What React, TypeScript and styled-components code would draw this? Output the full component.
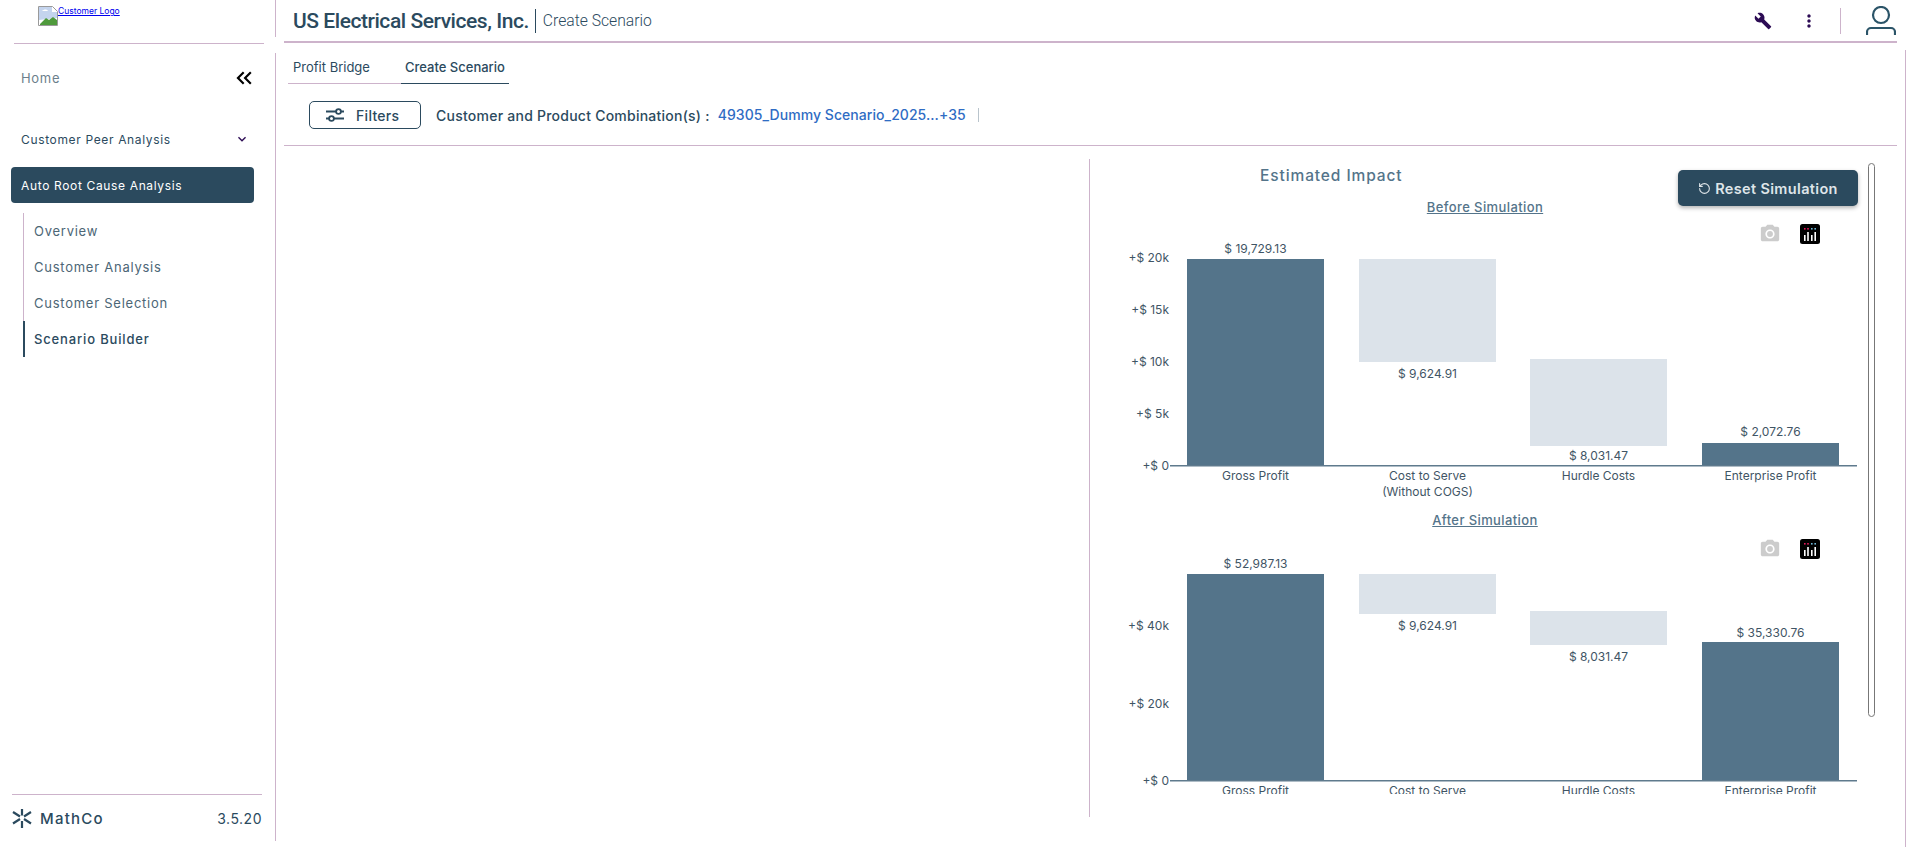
import React from 'react';
import styled, { createGlobalStyle } from 'styled-components';
import { MdBuild, MdMoreVert, MdKeyboardArrowDown, MdKeyboardDoubleArrowLeft, MdPhotoCamera } from 'react-icons/md';
import { RotateCcw } from 'lucide-react';

const GlobalStyle = createGlobalStyle`
  html, body { margin: 0; padding: 0; background: #fff; }
  body { font-family: Inter, "Noto Sans", sans-serif; color: #2b4a5e; }
  * { box-sizing: border-box; }
`;

const Page = styled.div`
  display: flex;
  width: 1920px;
  height: 847px;
  overflow: hidden;
`;

const Sidebar = styled.aside`
  width: 276px;
  flex: none;
  display: flex;
  flex-direction: column;
`;

const LogoBox = styled.div`
  height: 37px;
  padding: 6px 0 0 38px;
  border-right: 1px solid #cdb3cb;
`;

const LogoLink = styled.a`
  display: inline-flex;
  align-items: flex-start;
  color: #0000ee;
  font-size: 8.5px;
  line-height: 11px;
  text-decoration: underline;
`;

const LogoGap = styled.div`
  height: 16px;
  padding: 6px 12px 0 14px;
`;

const SideRule = styled.div`
  height: 1px;
  background: #cdb3cb;
`;

const SideBody = styled.div`
  height: 788px;
  border-right: 1px solid #cdb3cb;
  display: flex;
  flex-direction: column;
`;

const HomeRow = styled.div`
  height: 50px;
  padding: 0 18px 0 21px;
  display: flex;
  align-items: center;
  justify-content: space-between;
  font-size: 13px;
  letter-spacing: 0.7px;
  color: #6c7f8c;
`;

const NavHead = styled.div`
  margin-top: 21px;
  height: 30px;
  padding: 0 25px 0 21px;
  display: flex;
  align-items: center;
  justify-content: space-between;
  font-size: 12px;
  letter-spacing: 0.65px;
  color: #2b4a5e;
`;

const NavActive = styled.div`
  margin: 13px 21px 0 11px;
  height: 36px;
  padding-left: 10px;
  display: flex;
  align-items: center;
  border-radius: 4px;
  background: #2b4a5e;
  color: #fff;
  font-size: 12px;
  font-weight: 400;
  letter-spacing: 0.65px;
`;

const SubNav = styled.div`
  margin: 10px 0 0 23px;
  border-left: 1px solid #cdb3cb;
`;

const SubItem = styled.div<{ $active?: boolean }>`
  height: 36px;
  margin-left: ${p => (p.$active ? '-1px' : '0')};
  padding-left: ${p => (p.$active ? '9px' : '10px')};
  border-left: ${p => (p.$active ? '2px solid #2b4a5e' : 'none')};
  display: flex;
  align-items: center;
  font-size: 13px;
  font-weight: ${p => (p.$active ? 500 : 400)};
  letter-spacing: ${p => (p.$active ? '0.85px' : '0.75px')};
  color: ${p => (p.$active ? '#2b4a5e' : '#4c6676')};
`;

const SideFooter = styled.div`
  margin: auto 13px 0 12px;
  border-top: 1px solid #cdb3cb;
  height: 47px;
  display: flex;
  align-items: center;
  justify-content: space-between;
`;

const Brand = styled.div`
  display: flex;
  align-items: center;
  gap: 8px;
  font-size: 15px;
  font-weight: 500;
  letter-spacing: 1.25px;
  color: #2b4a5e;
`;

const Version = styled.div`
  font-size: 14px;
  letter-spacing: 0.5px;
  color: #2b4a5e;
`;

const Main = styled.main`
  flex: 1;
  min-width: 0;
  padding-left: 8px;
  display: flex;
  flex-direction: column;
`;

const Header = styled.header`
  height: 43px;
  margin-right: 23px;
  padding: 0 1px 0 9px;
  border-bottom: 2px solid #cdb3cb;
  display: flex;
  align-items: center;
`;

const Title = styled.h1`
  margin: 0;
  padding-right: 6px;
  font-family: Roboto, sans-serif;
  font-size: 21px;
  font-weight: 500;
  line-height: 24px;
  letter-spacing: -0.45px;
  color: #2b4a5e;
  border-right: 1px solid #2b4a5e;
`;

const SubTitle = styled.span`
  margin-left: 7px;
  font-family: Roboto, sans-serif;
  font-size: 15.7px;
  font-weight: 300;
  color: #2b4a5e;
`;

const HeaderTools = styled.div`
  margin-left: auto;
  display: flex;
  align-items: center;
  color: #2c0b54;
`;

const ToolIcon = styled.span`
  width: 46px;
  display: flex;
  justify-content: center;
`;

const ToolRule = styled.span`
  width: 1px;
  height: 26px;
  margin: 0 25px 0 8px;
  background: #cdb3cb;
`;

const Body = styled.div`
  flex: 1;
  min-height: 0;
  margin-top: 7px;
  margin-right: 14px;
  border-right: 1px solid #cdb3cb;
  display: flex;
  flex-direction: column;
`;

const Tabs = styled.div`
  height: 34px;
  margin-left: 4px;
  display: flex;
`;

const Tab = styled.div<{ $active?: boolean }>`
  width: ${p => (p.$active ? '108px' : '113px')};
  padding-left: ${p => (p.$active ? '4px' : '5px')};
  display: flex;
  align-items: center;
  font-size: 13px;
  font-weight: ${p => (p.$active ? 500 : 400)};
  color: #2b4a5e;
  border-bottom: 1px solid ${p => (p.$active ? '#2b4a5e' : '#cdb3cb')};
`;

const FilterRow = styled.div`
  height: 62px;
  margin-right: 8px;
  padding: 1px 0 0 25px;
  border-bottom: 1px solid #cdb3cb;
  display: flex;
  align-items: center;
`;

const FilterButton = styled.button`
  width: 112px;
  height: 28px;
  padding: 0 0 0 16px;
  display: flex;
  align-items: center;
  gap: 12px;
  background: #fff;
  border: 1px solid #2b4a5e;
  border-radius: 5px;
  color: #2b4a5e;
  font: 500 14px Inter, sans-serif;
  letter-spacing: 0.3px;
`;

const ComboLabel = styled.span`
  margin-left: 15px;
  font-size: 14px;
  font-weight: 500;
  letter-spacing: 0.24px;
  color: #2b4a5e;
`;

const ComboValue = styled.span`
  margin-left: 8px;
  padding-right: 12px;
  font-size: 14px;
  font-weight: 500;
  line-height: 14px;
  letter-spacing: 0.06px;
  color: #2f6cc4;
  border-right: 1px solid #b9c4cc;
`;

const Content = styled.div`
  flex: 1;
  min-height: 0;
  display: flex;
  justify-content: flex-end;
`;

const ImpactPanel = styled.section`
  position: relative;
  width: 816px;
  height: 658px;
  margin: 13px 0 0 0;
  border-left: 1px solid #cdb3cb;
`;

const ImpactTitle = styled.h2`
  margin: 7px 0 0 170px;
  height: 18px;
  font-size: 15.5px;
  line-height: 20px;
  font-weight: 500;
  letter-spacing: 0.9px;
  color: #54748a;
`;

const ResetButton = styled.button`
  position: absolute;
  top: 11px;
  left: 588px;
  width: 180px;
  height: 36px;
  display: flex;
  align-items: center;
  justify-content: center;
  gap: 4px;
  border: none;
  border-radius: 5px;
  background: #2b4a5e;
  color: #dfe5e9;
  font: 600 14.5px Inter, sans-serif;
  letter-spacing: 0.35px;
  box-shadow: 0 2px 4px rgba(0, 0, 0, 0.3);
`;

const ScrollThumb = styled.div`
  position: absolute;
  top: 4px;
  left: 778px;
  width: 7px;
  height: 554px;
  background: #fff;
  border: 1px solid #777;
  border-radius: 4px;
`;

const ChartBlock = styled.div`
  width: 790px;
  padding-top: 13px;
`;

const ChartTitle = styled.div`
  height: 20px;
  text-align: center;
  font-size: 13px;
  line-height: 20px;
  font-weight: 500;
  letter-spacing: 0.4px;
  text-decoration: underline;
  color: #54748a;
`;

const PlotArea = styled.div<{ $height: number }>`
  position: relative;
  height: ${p => p.$height}px;
  overflow: hidden;
`;

const Modebar = styled.div<{ $top: number }>`
  position: absolute;
  top: ${p => p.$top}px;
  right: 60px;
  display: flex;
  align-items: center;
  gap: 19px;
  color: #cccccc;
`;

const PlotSvg = styled.svg`
  display: block;
  font-family: Inter, "Noto Sans", sans-serif;
  font-size: 12px;
  fill: #3f5565;
`;

type Bar = {
  x: number;
  top: number;
  bottom: number;
  kind: 'total' | 'step';
  value: string;
  valueY: number;
  label: string[];
};

type Tick = { label: string; y: number };

const BAR_W = 137;

const Chart = ({ bars, ticks, axisY, height, labelY }: { bars: Bar[]; ticks: Tick[]; axisY: number; height: number; labelY: number }) => (
  <PlotSvg width={790} height={height}>
    {ticks.map(t => (
      <text key={t.label} x={79} y={t.y + 4} textAnchor="end">{t.label}</text>
    ))}
    {bars.map(b => (
      <g key={b.label[0]}>
        <rect
          x={b.x}
          y={b.top}
          width={BAR_W}
          height={b.bottom - b.top}
          fill={b.kind === 'total' ? '#54748a' : '#dce3ea'}
        />
        <text x={b.x + BAR_W / 2} y={b.valueY + 4} textAnchor="middle">{b.value}</text>
        {b.label.map((line, i) => (
          <text key={line} x={b.x + BAR_W / 2} y={labelY + i * 16} textAnchor="middle">{line}</text>
        ))}
      </g>
    ))}
    <rect x={80} y={axisY - 1} width={687} height={1.5} fill="#5f7a8d" />
  </PlotSvg>
);

const BrokenImage = () => (
  <svg width="20" height="20" viewBox="0 0 20 20">
    <path d="M.5.5h14l5 5v14H.5z" fill="#fff" stroke="#9a9a9a" />
    <path d="M1 1h13v5h5v6L1 14z" fill="#c4d4ee" />
    <path d="M2 18l6-6 3 2 4-3 4 3v5H2z" fill="#4f9a3c" />
    <path d="M4 5c2-2 5-2 6 0z" fill="#fff" />
  </svg>
);

const FilterIcon = () => (
  <svg width="18" height="14" viewBox="0 0 18 14" fill="none" stroke="#2b4a5e" strokeWidth="1.8">
    <path d="M0 3.5h10M15 3.5h3M0 10.5h3M8 10.5h10" />
    <circle cx="12.5" cy="3.5" r="2.4" />
    <circle cx="5.5" cy="10.5" r="2.4" />
  </svg>
);

const UserIcon = () => (
  <svg width="30" height="30" viewBox="0 0 30 30" fill="none" stroke="#2b5468" strokeWidth="2.2">
    <circle cx="15" cy="9" r="8" />
    <path d="M1 29v-3a4 4 0 0 1 4-4h20a4 4 0 0 1 4 4v3" />
  </svg>
);

const MathCoMark = () => (
  <svg width="20" height="20" viewBox="0 0 20 20" stroke="#2b4a5e" strokeWidth="2.2">
    <path d="M10 1v6.5M10 13v7M1 4l7 4.5M19 4l-7 4.5M1 15.5l7-4.5M19 15.5l-7-4.5" />
  </svg>
);

const PlotlyIcon = () => (
  <svg width="20" height="20" viewBox="0 0 20 20">
    <rect width="20" height="20" rx="2.5" fill="#000" />
    <g fill="#e6175c">
      <rect x="4" y="4" width="1.6" height="1.6" />
      <rect x="7.2" y="4" width="1.6" height="1.6" />
    </g>
    <g fill="#6fb7d6">
      <rect x="11" y="4" width="1.6" height="1.6" />
      <rect x="14.4" y="4" width="1.6" height="1.6" />
    </g>
    <g fill="#fff">
      <rect x="4" y="11" width="1.6" height="6" />
      <rect x="7.2" y="8" width="1.6" height="9" />
      <rect x="11" y="11" width="1.6" height="6" />
      <rect x="14.4" y="8" width="1.6" height="9" />
    </g>
  </svg>
);

const beforeBars: Bar[] = [
  { x: 97, top: 42, bottom: 249, kind: 'total', value: '$ 19,729.13', valueY: 32, label: ['Gross Profit'] },
  { x: 269, top: 42, bottom: 145, kind: 'step', value: '$ 9,624.91', valueY: 157, label: ['Cost to Serve', '(Without COGS)'] },
  { x: 440, top: 142, bottom: 229, kind: 'step', value: '$ 8,031.47', valueY: 239, label: ['Hurdle Costs'] },
  { x: 612, top: 226, bottom: 249, kind: 'total', value: '$ 2,072.76', valueY: 215, label: ['Enterprise Profit'] },
];

const afterBars: Bar[] = [
  { x: 97, top: 44, bottom: 251, kind: 'total', value: '$ 52,987.13', valueY: 34, label: ['Gross Profit'] },
  { x: 269, top: 44, bottom: 84, kind: 'step', value: '$ 9,624.91', valueY: 96, label: ['Cost to Serve'] },
  { x: 440, top: 81, bottom: 115, kind: 'step', value: '$ 8,031.47', valueY: 127, label: ['Hurdle Costs'] },
  { x: 612, top: 112, bottom: 251, kind: 'total', value: '$ 35,330.76', valueY: 103, label: ['Enterprise Profit'] },
];

const beforeTicks: Tick[] = [
  { label: '+$ 20k', y: 41 },
  { label: '+$ 15k', y: 93 },
  { label: '+$ 10k', y: 145 },
  { label: '+$ 5k', y: 197 },
  { label: '+$ 0', y: 249 },
];

const afterTicks: Tick[] = [
  { label: '+$ 40k', y: 96 },
  { label: '+$ 20k', y: 174 },
  { label: '+$ 0', y: 251 },
];

const ModebarIcons = ({ top }: { top: number }) => (
  <Modebar $top={top}>
    <MdPhotoCamera size={22} />
    <PlotlyIcon />
  </Modebar>
);

export default function App() {
  return (
    <Page>
      <GlobalStyle />
      <Sidebar>
        <LogoBox>
          <LogoLink href="#">
            <BrokenImage />
            Customer Logo
          </LogoLink>
        </LogoBox>
        <LogoGap>
          <SideRule />
        </LogoGap>
        <SideBody>
          <HomeRow>
            Home
            <MdKeyboardDoubleArrowLeft size={26} color="#000" />
          </HomeRow>
          <NavHead>
            Customer Peer Analysis
            <MdKeyboardArrowDown size={16} color="#2c0b54" />
          </NavHead>
          <NavActive>Auto Root Cause Analysis</NavActive>
          <SubNav>
            <SubItem>Overview</SubItem>
            <SubItem>Customer Analysis</SubItem>
            <SubItem>Customer Selection</SubItem>
            <SubItem $active>Scenario Builder</SubItem>
          </SubNav>
          <SideFooter>
            <Brand>
              <MathCoMark />
              MathCo
            </Brand>
            <Version>3.5.20</Version>
          </SideFooter>
        </SideBody>
      </Sidebar>
      <Main>
        <Header>
          <Title>US Electrical Services, Inc.</Title>
          <SubTitle>Create Scenario</SubTitle>
          <HeaderTools>
            <ToolIcon><MdBuild size={18} /></ToolIcon>
            <ToolIcon><MdMoreVert size={20} /></ToolIcon>
            <ToolRule />
            <UserIcon />
          </HeaderTools>
        </Header>
        <Body>
          <Tabs>
            <Tab>Profit Bridge</Tab>
            <Tab $active>Create Scenario</Tab>
          </Tabs>
          <FilterRow>
            <FilterButton>
              <FilterIcon />
              Filters
            </FilterButton>
            <ComboLabel>Customer and Product Combination(s) :</ComboLabel>
            <ComboValue>49305_Dummy Scenario_2025...+35</ComboValue>
          </FilterRow>
          <Content>
            <ImpactPanel>
              <ImpactTitle>Estimated Impact</ImpactTitle>
              <ResetButton>
                <RotateCcw size={13} />
                Reset Simulation
              </ResetButton>
              <ScrollThumb />
              <ChartBlock>
                <ChartTitle>Before Simulation</ChartTitle>
                <PlotArea $height={293}>
                  <ModebarIcons top={6} />
                  <Chart bars={beforeBars} ticks={beforeTicks} axisY={249} height={293} labelY={263} />
                </PlotArea>
                <ChartTitle>After Simulation</ChartTitle>
                <PlotArea $height={264}>
                  <ModebarIcons top={8} />
                  <Chart bars={afterBars} ticks={afterTicks} axisY={251} height={264} labelY={265} />
                </PlotArea>
              </ChartBlock>
            </ImpactPanel>
          </Content>
        </Body>
      </Main>
    </Page>
  );
}
